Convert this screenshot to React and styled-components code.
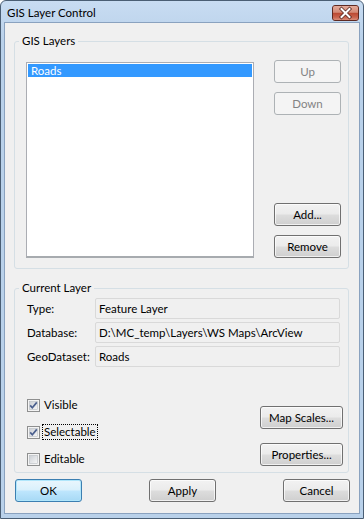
import React from "react";
import styled, { createGlobalStyle, css } from "styled-components";

const GlobalStyle = createGlobalStyle`
  html, body { margin: 0; padding: 0; background: #ffffff; }
  body {
    font-family: Lato, "Noto Sans", sans-serif;
    font-size: 11.5px;
    color: #000;
  }
  * { box-sizing: border-box; }
`;

const Window = styled.div`
  width: 364px;
  height: 519px;
  display: flex;
  flex-direction: column;
  background: linear-gradient(#c8dcf2, #b9d1ea 40px, #b9d1ea);
  border: 1px solid #4a5e74;
  border-radius: 6px 6px 0 0;
  padding: 0 3px 4px 3px;
`;

const TitleBar = styled.div`
  height: 21px;
  display: flex;
  align-items: center;
  justify-content: space-between;
  padding-left: 3px;
  padding-right: 1px;
`;

const Title = styled.span`
  font-size: 11.5px;
  padding-top: 1px;
`;

const WindowClose = styled.div`
  flex: 0 0 27px;
  height: 16px;
  margin-top: 2px;
  border: 1px solid #5e2a22;
  border-radius: 3px;
  display: flex;
  align-items: center;
  justify-content: center;
  background: #c85a44;
`;

const Client = styled.div`
  flex: 1;
  display: flex;
  flex-direction: column;
  background: #f0f0f0;
  border: 1px solid #8aa2bf;
  padding: 10px 10px 0 9px;
`;

const Group = styled.fieldset`
  margin: ${p => (p.$first ? "0" : "11px 0 0 0")};
  border: 1px solid #d5dfe5;
  border-radius: 3px;
  padding: ${p => p.$pad};
  min-width: 0;
`;

const Legend = styled.legend`
  padding: 0 3px;
  margin-left: ${p => p.$shift}px;
  line-height: 16px;
`;

const LayerRow = styled.div`
  display: flex;
  gap: 20px;
`;

const ListBox = styled.div`
  width: 228px;
  height: 196px;
  margin-top: 2px;
  background: #fff;
  border: 1px solid #abadb3;
  border-bottom: 2px solid #a7abaf;
  padding: 1px;
`;

const ListItem = styled.div`
  height: 13px;
  line-height: 13px;
  padding-left: 3px;
  color: ${p => (p.$selected ? "#fff" : "#000")};
  background: ${p => (p.$selected ? "#3399ff" : "transparent")};
`;

const ButtonColumn = styled.div`
  display: flex;
  flex-direction: column;
  gap: ${p => p.$gap}px;
  padding-top: ${p => p.$top || 0}px;
`;

const Spacer = styled.div`
  flex: 1;
`;

const Button = styled.button`
  font: inherit;
  width: ${p => p.$w}px;
  height: 23px;
  padding: 0;
  border-radius: 3px;
  border: 1px solid #707070;
  color: #000;
  background: linear-gradient(#f2f2f2, #ebebeb 48%, #dddddd 52%, #cfcfcf);
  box-shadow: inset 0 0 0 1px rgba(255, 255, 255, 0.7);
  ${p =>
    p.disabled &&
    css`
      border-color: #adb2b5;
      color: #838383;
      background: #f4f4f4;
      box-shadow: none;
    `}
  ${p =>
    p.$default &&
    css`
      border-color: #3c7fb1;
      background: linear-gradient(#eaf6fd, #d9f0fc 48%, #bee6fd 52%, #a7d9f5);
      box-shadow: inset 0 0 0 1px #b0e6fb;
    `}
`;

const Fields = styled.div`
  display: flex;
  flex-direction: column;
  gap: 3px;
`;

const FieldRow = styled.div`
  display: flex;
  align-items: center;
  height: 21px;
`;

const FieldLabel = styled.span`
  width: 68px;
`;

const FieldValue = styled.div`
  flex: 1;
  height: 21px;
  margin-right: 3px;
  display: flex;
  align-items: center;
  padding-left: 3px;
  background: #f0f0f0;
  border: 1px solid #d9d9d9;
  border-radius: 2px;
`;

const Lower = styled.div`
  display: flex;
  justify-content: space-between;
  margin-top: 30px;
`;

const CheckColumn = styled.div`
  display: flex;
  flex-direction: column;
  gap: 11px;
`;

const CheckRow = styled.div`
  display: flex;
  align-items: center;
  height: 16px;
  gap: 2px;
`;

const CheckLabel = styled.span`
  line-height: 14px;
  padding: 0 1px;
  border: 1px ${p => (p.$focus ? "dotted #000" : "solid transparent")};
`;

const BottomRow = styled.div`
  display: flex;
  justify-content: space-between;
  margin: 6px -1px 0 1px;
`;

function CloseIcon() {
  return (
    <svg width="25" height="14" viewBox="0 0 25 14">
      <defs>
        <linearGradient id="closebg" x1="0" y1="0" x2="0" y2="1">
          <stop offset="0" stopColor="#e3ab9b" />
          <stop offset="0.45" stopColor="#d48a76" />
          <stop offset="0.52" stopColor="#bb4a33" />
          <stop offset="0.8" stopColor="#c9634d" />
          <stop offset="1" stopColor="#d98f7b" />
        </linearGradient>
      </defs>
      <rect x="0" y="0" width="25" height="14" rx="2" fill="url(#closebg)" />
      <path d="M8.5 3 L16.5 11 M16.5 3 L8.5 11" stroke="#5a2a22" strokeWidth="3.6" strokeLinecap="square" />
      <path d="M8.5 3 L16.5 11 M16.5 3 L8.5 11" stroke="#ffffff" strokeWidth="2" strokeLinecap="square" />
    </svg>
  );
}

function CheckBox({ checked }) {
  return (
    <svg width="13" height="13" viewBox="0 0 13 13">
      <defs>
        <linearGradient id="cbg" x1="0" y1="0" x2="1" y2="1">
          <stop offset="0" stopColor="#cbcfd5" />
          <stop offset="1" stopColor="#f7f7f7" />
        </linearGradient>
      </defs>
      <rect x="0.5" y="0.5" width="12" height="12" fill="#f4f4f4" stroke="#8e8f8f" />
      <rect x="2.5" y="2.5" width="8" height="8" fill="url(#cbg)" stroke="#b8bcc2" strokeWidth="0.6" />
      {checked && (
        <path d="M3.2 6.4 L5.3 8.8 L9.8 3.4" fill="none" stroke="#4a5f8e" strokeWidth="1.7" />
      )}
    </svg>
  );
}

function Check({ label, checked, focus }) {
  return (
    <CheckRow>
      <CheckBox checked={checked} />
      <CheckLabel $focus={focus}>{label}</CheckLabel>
    </CheckRow>
  );
}

export default function App() {
  return (
    <>
      <GlobalStyle />
      <Window>
        <TitleBar>
          <Title>GIS Layer Control</Title>
          <WindowClose>
            <CloseIcon />
          </WindowClose>
        </TitleBar>
        <Client>
          <Group $first $pad="11px 6px 10px 11px">
            <Legend $shift={-7}>GIS Layers</Legend>
            <LayerRow>
              <ListBox>
                <ListItem $selected>Roads</ListItem>
              </ListBox>
              <ButtonColumn $gap={9}>
                <Button $w={67} disabled>Up</Button>
                <Button $w={67} disabled>Down</Button>
                <Spacer />
                <Button $w={67}>Add...</Button>
                <Button $w={67}>Remove</Button>
              </ButtonColumn>
            </LayerRow>
          </Group>
          <Group $pad="2px 5px 5px 12px">
            <Legend $shift={-8}>Current Layer</Legend>
            <Fields>
              <FieldRow>
                <FieldLabel>Type:</FieldLabel>
                <FieldValue>Feature Layer</FieldValue>
              </FieldRow>
              <FieldRow>
                <FieldLabel>Database:</FieldLabel>
                <FieldValue>D:\MC_temp\Layers\WS Maps\ArcView</FieldValue>
              </FieldRow>
              <FieldRow>
                <FieldLabel>GeoDataset:</FieldLabel>
                <FieldValue>Roads</FieldValue>
              </FieldRow>
            </Fields>
            <Lower>
              <CheckColumn>
                <Check label="Visible" checked />
                <Check label="Selectable" checked focus />
                <Check label="Editable" />
              </CheckColumn>
              <ButtonColumn $gap={14} $top={9}>
                <Button $w={83}>Map Scales...</Button>
                <Button $w={83}>Properties...</Button>
              </ButtonColumn>
            </Lower>
          </Group>
          <BottomRow>
            <Button $w={67} $default>OK</Button>
            <Button $w={67}>Apply</Button>
            <Button $w={67}>Cancel</Button>
          </BottomRow>
        </Client>
      </Window>
    </>
  );
}
